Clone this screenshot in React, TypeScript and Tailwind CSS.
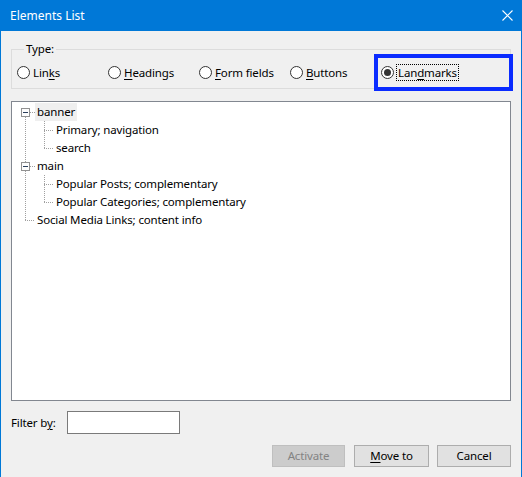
import React from "react";

type Kind = "open" | "mid" | "last" | "leaf-last" | "open-mid";

function Gutter({ kind, hasNext }: { kind: Kind; hasNext: boolean }) {
  const dot = { stroke: "#a0a0a0", strokeWidth: 1, strokeDasharray: "1 1" };
  if (kind === "open" || kind === "open-mid") {
    return (
      <svg width="23" height="18" className="shrink-0" shapeRendering="crispEdges">
        {kind === "open-mid" && <line x1="13.5" y1="0" x2="13.5" y2="5" {...dot} />}
        <line x1="13.5" y1="14" x2="13.5" y2="18" {...dot} />
        <rect x="9.5" y="5.5" width="8" height="8" fill="#fdfdfd" stroke="#919191" />
        <line x1="11" y1="9.5" x2="16" y2="9.5" stroke="#2b3f5c" />
        <line x1="18" y1="9.5" x2="23" y2="9.5" {...dot} />
      </svg>
    );
  }
  if (kind === "leaf-last") {
    return (
      <svg width="23" height="18" className="shrink-0" shapeRendering="crispEdges">
        <line x1="13.5" y1="0" x2="13.5" y2="9" {...dot} />
        <line x1="13" y1="9.5" x2="23" y2="9.5" {...dot} />
      </svg>
    );
  }
  return (
    <svg width="42" height="18" className="shrink-0" shapeRendering="crispEdges">
      <line x1="13.5" y1="0" x2="13.5" y2="18" {...dot} />
      <line x1="32.5" y1="0" x2="32.5" y2={hasNext ? 18 : 9} {...dot} />
      <line x1="32" y1="9.5" x2="42" y2="9.5" {...dot} />
    </svg>
  );
}

const rows: { label: string; kind: Kind; hasNext: boolean; sel?: boolean }[] = [
  { label: "banner", kind: "open", hasNext: true, sel: true },
  { label: "Primary; navigation", kind: "mid", hasNext: true },
  { label: "search", kind: "mid", hasNext: false },
  { label: "main", kind: "open-mid", hasNext: true },
  { label: "Popular Posts; complementary", kind: "mid", hasNext: true },
  { label: "Popular Categories; complementary", kind: "mid", hasNext: false },
  { label: "Social Media Links; content info", kind: "leaf-last", hasNext: false },
];

function Radio({ pre, k, post, checked }: { pre: string; k: string; post: string; checked?: boolean }) {
  return (
    <div className="flex items-center gap-[3px]">
      <span className="w-[13px] h-[13px] rounded-full border border-[#333333] bg-white flex items-center justify-center shrink-0">
        {checked && <span className="w-[7px] h-[7px] rounded-full bg-[#333333]" />}
      </span>
      <span className={checked ? "outline outline-1 outline-dotted outline-black leading-[15px] px-px" : "leading-[15px]"}>
        {pre}
        <span className="underline underline-offset-2">{k}</span>
        {post}
      </span>
    </div>
  );
}

export default function App() {
  return (
    <div className="w-[522px] h-[477px] bg-[#f0f0f0] flex flex-col font-['Noto_Sans',sans-serif] text-[11.5px] tracking-[-0.15px] text-black overflow-hidden">
      {/* Title bar */}
      <div className="h-[31px] bg-[#0078d7] flex items-center justify-between pl-[10px] pr-[9px] text-white shrink-0 text-[12px] tracking-normal">
        <span>Elements List</span>
        <svg width="11" height="11" viewBox="0 0 11 11">
          <path d="M0.5 0.5 L10.5 10.5 M10.5 0.5 L0.5 10.5" stroke="white" strokeWidth="1.1" />
        </svg>
      </div>

      <div className="flex-1 flex flex-col border-l border-r border-[#0078d7] px-[10px]">
        {/* Type group */}
        <div className="relative mt-[10px]">
          <fieldset className="border border-[#dcdcdc] h-[48px] pl-[5px] pt-[8px]">
            <legend className="ml-[7px] px-[2px] leading-[16px]">Type:</legend>
            <div className="grid grid-cols-[repeat(5,91px)] items-center">
              <Radio pre="Lin" k="k" post="s" />
              <Radio pre="" k="H" post="eadings" />
              <Radio pre="" k="F" post="orm fields" />
              <Radio pre="" k="B" post="uttons" />
              <Radio pre="Lan" k="d" post="marks" checked />
            </div>
          </fieldset>
          {/* annotation highlight */}
          <div className="absolute left-[363px] top-[13px] w-[139px] h-[37px] border-[4px] border-[#0a2bff]" />
        </div>

        {/* Tree */}
        <div className="mt-[12px] h-[300px] border border-[#828790] bg-white pt-px">
          {rows.map((r) => (
            <div key={r.label} className="flex items-center h-[18px]">
              <Gutter kind={r.kind} hasNext={r.hasNext} />
              <span className={"px-[2px] leading-[18px] whitespace-nowrap " + (r.sel ? "bg-[#efefef]" : "")}>{r.label}</span>
            </div>
          ))}
        </div>

        {/* Filter */}
        <div className="flex items-center mt-[10px] h-[23px]">
          <span className="w-[56px]">
            Filter b<span className="underline underline-offset-2">y</span>:
          </span>
          <div className="w-[113px] h-[23px] border border-[#7a7a7a] bg-white" />
        </div>

        {/* Buttons */}
        <div className="flex justify-end mt-[11px]">
          <div className="w-[73px] h-[22px] border border-[#bfbfbf] bg-[#cccccc] text-[#838383] flex items-center justify-center">
            Activate
          </div>
          <div className="w-[75px] h-[22px] border border-[#adadad] bg-[#e1e1e1] flex items-center justify-center ml-[9px]">
            <span>
              <span className="underline underline-offset-2">M</span>ove to
            </span>
          </div>
          <div className="w-[74px] h-[22px] border border-[#adadad] bg-[#e1e1e1] flex items-center justify-center ml-[8px]">
            Cancel
          </div>
        </div>
      </div>
    </div>
  );
}
